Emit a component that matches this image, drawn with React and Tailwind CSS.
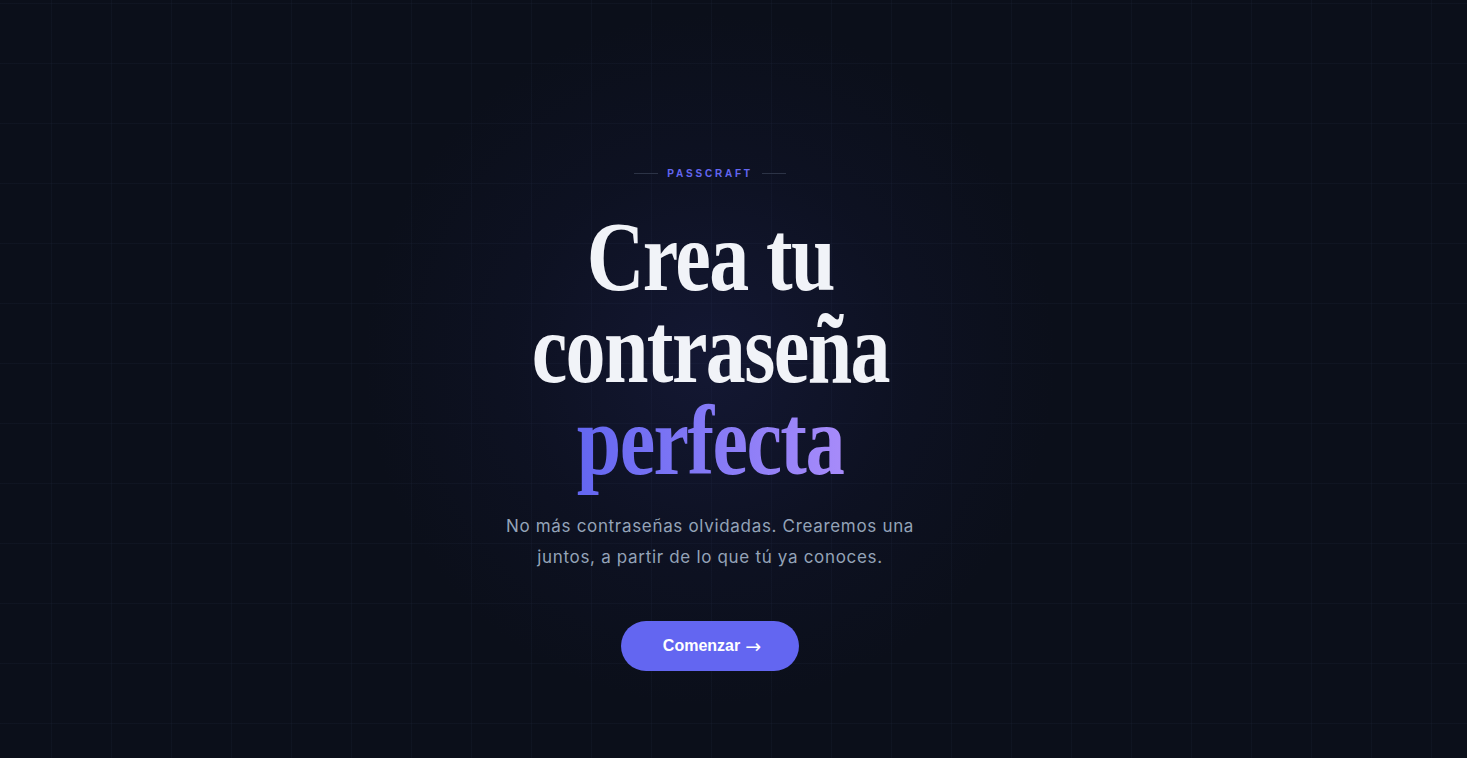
export default function App() {
  return (
    <div
      className="relative min-h-screen w-full overflow-hidden bg-[#0b0f1a] bg-[linear-gradient(to_right,rgba(40,48,72,0.16)_1px,transparent_1px),linear-gradient(to_bottom,rgba(40,48,72,0.16)_1px,transparent_1px)] bg-[size:60px_60px] bg-[position:51px_3px]"
    >
      <div className="pointer-events-none absolute left-[710px] top-[360px] h-[700px] w-[700px] -translate-x-1/2 -translate-y-1/2 rounded-full bg-[radial-gradient(circle,rgba(40,44,110,0.3)_0%,rgba(30,34,90,0.12)_40%,transparent_70%)]" />

      <main className="relative flex min-h-screen flex-col items-center pr-[47px] pt-[166px] text-center">
        <div className="flex items-center gap-[9px]">
          <span className="h-px w-6 bg-[#2c3346]" />
          <span className="font-['Liberation_Sans',sans-serif] text-[10px] font-bold uppercase tracking-[0.28em] text-[#6366f1]">
            Passcraft
          </span>
          <span className="h-px w-6 bg-[#2c3346]" />
        </div>

        <h1 className="mt-[30px] font-['Liberation_Serif',serif] text-[100px] font-bold leading-[92px] tracking-[-0.02em]">
          <span className="block origin-center scale-x-[0.8] text-[#f1f3f8]">Crea tu</span>
          <span className="block origin-center scale-x-[0.8] text-[#f1f3f8]">contraseña</span>
          <span className="block origin-center scale-x-[0.8]">
            <span className="bg-gradient-to-r from-[#6366f1] to-[#a78bfa] bg-clip-text text-transparent">
              perfecta
            </span>
          </span>
        </h1>

        <p className="mt-[24px] max-w-[450px] font-['Inter',sans-serif] text-[17px] leading-[31px] tracking-[0.04em] text-[#94a3b8]">
          No más contraseñas olvidadas. Crearemos una juntos, a partir de lo que tú ya conoces.
        </p>

        <button className="mt-[48px] flex h-[50px] w-[178px] items-center justify-center gap-[5px] rounded-full bg-[#6366f1] pl-1 font-['Liberation_Sans',sans-serif] text-[16px] font-bold text-white">
          Comenzar
          <span className="font-['DejaVu_Sans',sans-serif] text-[19px] font-normal leading-none">→</span>
        </button>
      </main>
    </div>
  );
}
